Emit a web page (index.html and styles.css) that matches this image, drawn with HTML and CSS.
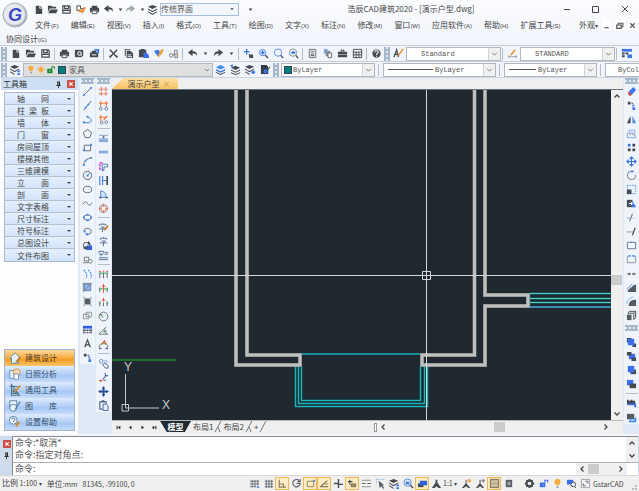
FILE: index.html
```
<!DOCTYPE html>
<html lang="zh-CN">
<head>
    <meta charset="utf-8">
    <title>浩辰CAD建筑2020</title>
    <link rel="stylesheet" href="styles.css">
</head>
<body>
    <svg class="sprite" aria-hidden="true">
        <symbol id="new" viewBox="0 0 12 12"><path fill="#454a50" d="M3 2h4v3h3v6H3zM8 2l2 2H8z"/></symbol>
        <symbol id="open" viewBox="0 0 12 12"><path fill="#454a50" d="M1 2h4l1 1h4v2H3L1 9zM3.500 6H12l-2 4H1.500z"/></symbol>
        <symbol id="save" viewBox="0 0 12 12"><path fill="none" stroke="#454a50" stroke-width="1.300" d="M2 2h7l1 1v7H2zM4 2v3h4V2M2 7h8"/></symbol>
        <symbol id="saveas" viewBox="0 0 12 12"><path fill="none" stroke="#454a50" d="M2 2h4v3h3M2 2v5h3"/><path fill="#e8922e" d="M4 6h4l2-3 2 1-4 7-1-2H4z"/></symbol>
        <symbol id="print" viewBox="0 0 12 12"><path fill="#454a50" d="M3 2h6v2H3zM1 4h10v5H9V7H3v2H1z"/><path fill="none" stroke="#454a50" d="M3.500 7.500h5v3h-5z"/></symbol>
        <symbol id="preview" viewBox="0 0 12 12"><path fill="#454a50" d="M1 2h9v8H1z"/><circle cx="6" cy="6" r="2.500" fill="#fff"/><circle cx="6" cy="6" r="1.300" fill="#454a50"/><path stroke="#fff" d="M8 8l3 3"/></symbol>
        <symbol id="publish" viewBox="0 0 12 12"><path fill="#454a50" d="M1 5h9v5H1zM3 3h5v2H3z"/><path fill="#fff" d="M3 7h5v1H3z"/><path fill="#3b78e7" d="M6 1h5v5H9V3H6z"/></symbol>
        <symbol id="cut" viewBox="0 0 12 12"><path fill="none" stroke="#454a50" stroke-width="1.500" d="M2 2l7 7M10 2L3 9"/><circle cx="2.500" cy="9.500" r="1.200" fill="#454a50"/><circle cx="9.500" cy="9.500" r="1.200" fill="#454a50"/></symbol>
        <symbol id="copy" viewBox="0 0 12 12"><path fill="#454a50" d="M2 1h6v1H3v7H2zM4 3h4l3 3v5H4z"/><path stroke="#fff" d="M5 7.500h4M5 9.500h5"/></symbol>
        <symbol id="paste" viewBox="0 0 12 12"><path fill="#454a50" d="M1 2h8v8H1zM3 1h4v2H3z"/><path fill="#3b6ff0" d="M6 5h3l3 3v3H6z"/></symbol>
        <symbol id="match" viewBox="0 0 12 12"><path fill="#3b78e7" d="M1 3l5-1 2 3-3 4z"/><path fill="#e8a23a" d="M7 4l3-3 2 1-3 5-4 4 1-4z"/></symbol>
        <symbol id="blockedit" viewBox="0 0 12 12"><path fill="none" stroke="#777c84" d="M5 7.500h2v-5h3v4M7.500 6.500h3v4h-3z"/><circle cx="3.500" cy="8" r="2" fill="none" stroke="#777c84"/><path stroke="#e8a23a" d="M8 10l3-3"/></symbol>
        <symbol id="undo" viewBox="0 0 12 12"><path fill="#454a50" d="M1 5l5-4v2.500c4 0 5 2 5 5-1-2-2-2.500-5-2.500V9z"/></symbol>
        <symbol id="redo" viewBox="0 0 12 12"><path fill="#454a50" d="M11 5L6 1v2.500C2 3.500 1 6 1 9c1-2 2-3 5-3v3z"/></symbol>
        <symbol id="redo-off" viewBox="0 0 12 12"><path fill="#a2a7ae" d="M11 5L6 1v2.500C2 3.500 1 6 1 9c1-2 2-3 5-3v3z"/></symbol>
        <symbol id="drop" viewBox="0 0 12 12"><path fill="#444" d="M4 5h4L6 7.500z"/></symbol>
        <symbol id="layers" viewBox="0 0 12 12"><path fill="#454a50" d="M6 1l5 2-5 2.500L1 3zM1 5l5 2.500L11 5v1.300L6 9 1 6.300zM1 8l5 2.500L11 8v1L6 12 1 9z"/></symbol>
        <symbol id="layers-set" viewBox="0 0 12 12"><path fill="#454a50" d="M5 1l5 2-5 2.500L0 3zM0 5l5 2.500L10 5v1L5 9 0 6zM0 8l5 2.500V12L0 9z"/><path fill="#3b78e7" d="M8 7h3v2H8zM8 10h3v2H8z"/></symbol>
        <symbol id="layers-blue" viewBox="0 0 12 12"><path fill="#3b8cf0" d="M6 1l5 2.500L6 6 1 3.500z"/><path fill="#2f6fd8" d="M1 5.500L6 8l5-2.500V7L6 9.500 1 7z"/><path fill="#454a50" d="M1 8.500L6 11l5-2.500v1L6 12 1 9.500z"/></symbol>
        <symbol id="layers-prev" viewBox="0 0 12 12"><path fill="#454a50" d="M6 2l5 2-5 2.500L1 4zM1 6l5 2.500L11 6v1L6 9.500 1 7zM1 9l5 2 5-2v1l-5 2-5-2z"/><path fill="#3b78e7" d="M0 2l3-2v4z"/></symbol>
        <symbol id="layers-dot" viewBox="0 0 12 12"><path fill="#454a50" d="M5 1l5 2-5 2.500L0 3zM0 5l5 2.500L10 5v1L5 9 0 6zM0 8l5 2.500V12L0 9z"/><circle cx="9" cy="9" r="2" fill="#3b78e7"/></symbol>
        <symbol id="layer-state" viewBox="0 0 12 12"><path fill="#333a44" d="M1 1h6l2 2v8H1z"/><path fill="#3b78e7" d="M4 6h4v4H4z"/><path stroke="#333a44" d="M8 7l3-4"/></symbol>
        <symbol id="pan" viewBox="0 0 12 12"><path stroke="#2f6fe4" stroke-width="1.300" d="M4 1v6M1 4h6"/><path fill="#454a50" d="M6 6l1 1h4v4H7z"/></symbol>
        <symbol id="zoom-in" viewBox="0 0 12 12"><circle cx="5" cy="5" r="3.500" fill="#dbe9ff" stroke="#4f8ae8"/><path stroke="#454a50" stroke-width="1.500" d="M8 8l3 3"/><path stroke="#2f6fe4" stroke-width="1.500" d="M5 3v4M3 5h4"/></symbol>
        <symbol id="zoom-window" viewBox="0 0 12 12"><circle cx="5.500" cy="5" r="4" fill="none" stroke="#4f8ae8"/><path stroke="#454a50" stroke-width="1.500" d="M8.500 8l2.500 3"/></symbol>
        <symbol id="zoom-prev" viewBox="0 0 12 12"><circle cx="5.500" cy="5" r="4" fill="none" stroke="#8a9098"/><path stroke="#454a50" stroke-width="1.500" d="M8.500 8l2.500 3"/><path fill="#2f6fe4" d="M3 5l3-2v1h2v2H6v1z"/></symbol>
        <symbol id="props" viewBox="0 0 12 12"><path fill="none" stroke="#666c74" d="M2.500 1.500h7v9h-7zM4 3.500h4M4 5.500h4"/><path fill="#666c74" d="M4 7h4v2H4z"/></symbol>
        <symbol id="sheets" viewBox="0 0 12 12"><path fill="#7da7ec" d="M2 1h4v5H2z"/><path fill="#8a9098" d="M4 3h5v6H4z"/><path fill="#f4f6fa" stroke="#666c74" d="M6.500 5.500h4v5h-4z"/></symbol>
        <symbol id="toolbox" viewBox="0 0 12 12"><path fill="#454a50" d="M4 2h4v2h3v3H1V4h3zM1 7.500h10V10H1z"/><path fill="#fff" d="M5 3h2v1H5z"/></symbol>
        <symbol id="calc" viewBox="0 0 12 12"><path fill="none" stroke="#454a50" d="M1.500 1.500h9v9h-9zM1 4.500h10M1 7.500h10M4.500 4v7M7.500 4v7"/></symbol>
        <symbol id="help" viewBox="0 0 12 12"><circle cx="6" cy="6" r="4.500" fill="#454a50"/><path fill="none" stroke="#fff" stroke-width="1.200" d="M4 4.500c0-2 4-2 4 0C8 6 6 5.500 6 7.500M6 8.500v1"/></symbol>
        <symbol id="style" viewBox="0 0 12 12"><path fill="none" stroke="#454a50" stroke-width="1.400" d="M1 10l3-8 2 8M2 7h4"/><path stroke="#e8922e" stroke-width="1.600" d="M11 1L6 8"/></symbol>
        <symbol id="dimstyle" viewBox="0 0 12 12"><path stroke="#9aa0a8" d="M1 9.500h10M2 8v3M10 8v3"/><path stroke="#e8922e" stroke-width="1.600" d="M9 2L4 8"/></symbol>
        <symbol id="tablestyle" viewBox="0 0 12 12"><path fill="#3b78e7" d="M1 1h11v3H1z"/><path fill="#454a50" d="M1 5h3v2H1zM5 5h3v2H5zM1 8h3v2H1z"/><path fill="#3b78e7" d="M7 7h5v4H7z"/></symbol>
        <symbol id="line" viewBox="0 0 12 12"><path stroke="#5d646d" d="M2 10l8-8"/><path fill="#3b8cf0" d="M1 9h2v2H1zM9 1h2v2H9z"/></symbol>
        <symbol id="xline" viewBox="0 0 12 12"><path stroke="#5d646d" d="M2 11l8-10"/><path fill="#3b8cf0" d="M3 7h2v2H3zM6 4h2v2H6z"/></symbol>
        <symbol id="pline" viewBox="0 0 12 12"><path fill="none" stroke="#3b78e7" d="M2 9.500h6c4-1 2-6-2-6"/><path fill="#3b8cf0" d="M1 8h2v2H1zM5 2h2v2H5z"/></symbol>
        <symbol id="polygon" viewBox="0 0 12 12"><path fill="none" stroke="#5d646d" d="M6 1.500l4.500 3.500-2 5.500h-5L1.500 5z"/></symbol>
        <symbol id="rect" viewBox="0 0 12 12"><path fill="none" stroke="#5d646d" d="M2.500 3.500h7v6h-7z"/><path fill="#3b8cf0" d="M1 8h2v2H1zM9 2h2v2H9z"/></symbol>
        <symbol id="arc" viewBox="0 0 12 12"><path fill="none" stroke="#5d646d" d="M2 10c0-5 3-7 8-8"/><path fill="#3b8cf0" d="M1 9h2v2H1zM3 4h2v2H3zM9 1h2v2H9z"/></symbol>
        <symbol id="circle" viewBox="0 0 12 12"><circle cx="6" cy="6" r="4.500" fill="none" stroke="#5d646d"/><path stroke="#3b8cf0" d="M5 7l4-4"/><path fill="#3b8cf0" d="M5 5h2v2H5z"/></symbol>
        <symbol id="ellipse" viewBox="0 0 12 12"><ellipse cx="6" cy="6" rx="4.500" ry="3.500" fill="none" stroke="#5d646d"/></symbol>
        <symbol id="spline" viewBox="0 0 12 12"><path fill="none" stroke="#5d646d" d="M1 7c2-4 4-3 5-1s3 3 5-1"/></symbol>
        <symbol id="ellipse-axis" viewBox="0 0 12 12"><ellipse cx="6" cy="6" rx="4" ry="3" fill="none" stroke="#5d646d"/><path fill="#3b8cf0" d="M1 5h2v2H1zM9 5h2v2H9zM5 2h2v2H5zM5 8h2v2H5z"/></symbol>
        <symbol id="ellipse-arc" viewBox="0 0 12 12"><path fill="none" stroke="#5d646d" d="M2 6c0-5 9-4 8 0 0 3-3 3-4 3"/><path fill="#3b8cf0" d="M2 5h2v2H2zM4 8h3v2H4z"/></symbol>
        <symbol id="insert" viewBox="0 0 12 12"><circle cx="5" cy="6" r="3.500" fill="none" stroke="#454a50"/><path fill="#2f5fe4" d="M5 6h6v5H5z"/><path fill="#454a50" d="M7 1l3 4H6zM2 7h4v3H2z"/></symbol>
        <symbol id="block" viewBox="0 0 12 12"><path fill="none" stroke="#6b727b" d="M1 9.500h6M2.500 3.500h5v4h-5z"/><circle cx="9" cy="8" r="2" fill="#fff" stroke="#6b727b"/></symbol>
        <symbol id="points" viewBox="0 0 12 12"><path fill="none" stroke="#3b8cf0" stroke-width="1.300" stroke-dasharray="2 1" d="M2 2l3 4v5M7 2l3 4v5"/></symbol>
        <symbol id="hatch" viewBox="0 0 12 12"><path fill="#8fb5ea" stroke="#5d80b5" d="M2.500 2.500h7v7h-7z"/><path fill="none" stroke="#7b828b" d="M1 1.500h10M1.500 1v10M2 10l8-8"/></symbol>
        <symbol id="gradient" viewBox="0 0 12 12"><path fill="#555b63" d="M3 3h6v6H3z"/><path fill="none" stroke="#a4a9b0" d="M1 1.500h2M9 1.500h2M2.500 2.500h7v7h-7zM1 10.500h2M9 10.500h2"/></symbol>
        <symbol id="region" viewBox="0 0 12 12"><path fill="#eef2f8" stroke="#8a9098" d="M4.500 2.500h6v5h-6zM1.500 4.500h6v5h-6z"/></symbol>
        <symbol id="table" viewBox="0 0 12 12"><path fill="#2f5fe4" d="M1 2h10v3H1z"/><path fill="#454a50" d="M1 6h3v2H1zM5 6h2v2H5zM8 6h3v2H8zM1 9h3v1H1zM5 9h2v1H5zM8 9h3v1H8z"/></symbol>
        <symbol id="mtext" viewBox="0 0 12 12"><path fill="none" stroke="#454a50" stroke-width="1.300" d="M3 10l3-8 3 8M4 7.500h4"/></symbol>
        <symbol id="nodes" viewBox="0 0 12 12"><path fill="#454a50" d="M2 2h3v3H2zM6 3h2v1H6z"/><path fill="#3b78e7" d="M7 5h2v2H7zM7 8h3v3H7z"/></symbol>
        <symbol id="grid-red" viewBox="0 0 12 12"><path stroke="#e8673f" stroke-dasharray="2 .5" d="M3.500 1v10M8.500 1v10M1 3.500h10M1 8.500h10"/></symbol>
        <symbol id="axis" viewBox="0 0 12 12"><path stroke="#f07a3a" stroke-width="1.200" d="M3 1v7M9 1v7M1 3.500h10"/><circle cx="3" cy="9.500" r="1.500" fill="#fff" stroke="#55789d"/><circle cx="9" cy="9.500" r="1.500" fill="#fff" stroke="#55789d"/></symbol>
        <symbol id="axis2" viewBox="0 0 12 12"><path fill="none" stroke="#f07a3a" stroke-width="1.200" d="M3 1v7M1 3.500h9M10 2L6 7"/><circle cx="4" cy="9.500" r="1.500" fill="#fff" stroke="#55789d"/><circle cx="9" cy="9" r="1.500" fill="#fff" stroke="#55789d"/></symbol>
        <symbol id="wall" viewBox="0 0 12 12"><path fill="#86abd9" d="M1 7h10v3H1z"/><path stroke="#7f9cbd" d="M1 2.500h10M1 6.500h10"/><path stroke="#53779f" d="M6 3v3M4.500 4.500h3"/></symbol>
        <symbol id="wall2" viewBox="0 0 12 12"><path fill="#86abd9" d="M1 4h10v3H1z"/></symbol>
        <symbol id="corner" viewBox="0 0 12 12"><path fill="none" stroke="#e41be0" stroke-width="1.300" stroke-dasharray="3 1" d="M5 2H2v7h3"/><path fill="none" stroke="#4775aa" d="M4.500 3.500h6v3h-4v4h-2z"/></symbol>
        <symbol id="door-gap" viewBox="0 0 12 12"><path stroke="#3f7fd0" stroke-width="1.200" d="M2 1v10M5 1v10M5 6h4"/><path stroke="#222" stroke-width="1.500" d="M10 1v10"/></symbol>
        <symbol id="door" viewBox="0 0 12 12"><path fill="#d8eaff" stroke="#3f7fd0" d="M3 9V2c4 1 6 3 6 7z"/><path stroke="#4f6479" stroke-width="1.300" d="M1 9.500h3M8 9.500h3"/></symbol>
        <symbol id="column" viewBox="0 0 12 12"><circle cx="6" cy="6" r="4.500" fill="none" stroke="#8d939b"/><path fill="none" stroke="#e8673f" d="M3.500 5V3.500H5M7 3.500h1.500V5M8.500 7v1.500H7M5 8.500H3.500V7M6 1v3M6 8v3M1 6h3M8 6h3"/></symbol>
        <symbol id="text-edit" viewBox="0 0 12 12"><path fill="none" stroke="#4f6f94" d="M1.500 4V2.500h7V4M5 1v1M3 5.500h4L5 7v3.500H4M1 7.500h7"/><path stroke="#c9721f" stroke-width="1.800" d="M11 4l-4 5"/></symbol>
        <symbol id="text-one" viewBox="0 0 12 12"><path fill="none" stroke="#4f6f94" d="M2.500 4V2.500h7V4M6 1v1M4 5.500h4L6 7v3.500H5M2 7.500h8"/></symbol>
        <symbol id="text-multi" viewBox="0 0 12 12"><path fill="none" stroke="#4f6f94" d="M1 3V1.500h5V3M1 4.500h5M3.500 4v3M7 2.500h4M7 4.500h4M1 8.500h10M1 10.500h10"/></symbol>
        <symbol id="dim" viewBox="0 0 12 12"><path stroke="#55606c" d="M2 4v6M6 4v6M10 4v6"/><path stroke="#2f9a4c" d="M1 4.500h10"/><path fill="#d44" d="M1 2h2v1H1zM5 2h2v1H5zM9 2h2v1H9z"/></symbol>
        <symbol id="dim-add" viewBox="0 0 12 12"><path stroke="#55606c" d="M2 5v5M10 5v5"/><path stroke="#2f9a4c" d="M1 6.500h10"/><path stroke="#e4522b" d="M6 1v10M4 3.500h4"/></symbol>
        <symbol id="dim-gap" viewBox="0 0 12 12"><path stroke="#55606c" d="M2 5v5M6 6v4M10 5v5"/><path stroke="#2f9a4c" d="M1 6.500h2M9 6.500h2"/><path stroke="#e4522b" d="M6 1v4M4 3.500h4"/></symbol>
        <symbol id="dim-radius" viewBox="0 0 12 12"><circle cx="6" cy="6" r="4.800" fill="none" stroke="#6b727b"/><path stroke="#2f9a4c" d="M2 4l4 3M2 4h3"/></symbol>
        <symbol id="dim-angle" viewBox="0 0 12 12"><path fill="none" stroke="#6b727b" d="M11 10H1l8-8M7 4c2 2 2 4 2 6"/><path fill="#2f9a4c" d="M6 6h2v2H6z"/></symbol>
        <symbol id="dim-arc" viewBox="0 0 12 12"><path fill="none" stroke="#2f9a4c" d="M1 8c1-4 9-4 10 0"/><path fill="none" stroke="#e4522b" stroke-width="1.300" d="M4 6l3-4 2 4"/><path stroke="#3f5f88" d="M1 10.500h3M8 10.500h3M2 8v3M10 8v3"/></symbol>
        <symbol id="links" viewBox="0 0 12 12"><circle cx="3.500" cy="3.500" r="2" fill="none" stroke="#6b8caf"/><circle cx="8.500" cy="4" r="1.500" fill="none" stroke="#7fa9e8"/><path fill="none" stroke="#4f6f94" d="M5 7l3-1 3 2v3H8z"/></symbol>
        <symbol id="swap" viewBox="0 0 12 12"><path stroke="#e4522b" d="M1 9.500h4M3 8v3"/><path fill="none" stroke="#4f6f94" stroke-width="1.200" d="M5 8l4-4M8 1v3h3M6 9h3"/></symbol>
        <symbol id="move-dark" viewBox="0 0 12 12"><path fill="#27509a" d="M6 0l2 3H7v2h2V4l3 2-3 2V7H7v2h1l-2 3-2-3h1V7H3v1L0 6l3-2v1h2V3H4z"/></symbol>
        <symbol id="clip" viewBox="0 0 12 12"><path fill="none" stroke="#44658f" stroke-width="1.200" d="M5 10H2V2h7v2M4 1h3"/><path fill="#e4eeff" stroke="#44658f" d="M5.500 4.500H9L11 6.500v5H5.500z"/></symbol>
        <symbol id="erase" viewBox="0 0 12 12"><path fill="#3b78f0" d="M8 1l3 3-5 6-3-4z"/><path fill="#e03a2d" d="M3 6l3 4-2 1-2-3z"/></symbol>
        <symbol id="mirror" viewBox="0 0 12 12"><path fill="#454a50" d="M5 2v8H1z"/><path fill="#4f8ae8" d="M7 2v8h4z"/></symbol>
        <symbol id="offset" viewBox="0 0 12 12"><path fill="none" stroke="#7da7ec" d="M1.500 10.500h9v-2h-1v-6h-6v3h-2z"/><path fill="none" stroke="#8a9098" d="M4.500 8V5.500h3V8"/></symbol>
        <symbol id="array" viewBox="0 0 12 12"><path fill="#3b78f0" d="M2 2h3v3H2z"/><path fill="#454a50" d="M7 2h3v3H7zM2 7h3v3H2zM7 7h3v3H7z"/></symbol>
        <symbol id="move" viewBox="0 0 12 12"><path fill="none" stroke="#2f6fe4" stroke-width="1.200" d="M6 1v10M1 6h10M4 3l2-2 2 2M4 9l2 2 2-2M3 4L1 6l2 2M9 4l2 2-2 2"/></symbol>
        <symbol id="rotate" viewBox="0 0 12 12"><path fill="none" stroke="#8a9098" stroke-width="1.200" d="M7 1.500A4.500 4.500 0 1 0 10.500 5"/><path fill="#3b78f0" d="M6 0l3 1.500L6 3z"/></symbol>
        <symbol id="scale" viewBox="0 0 12 12"><path fill="none" stroke="#4f8ae8" stroke-dasharray="1.500 1" d="M1.500 1.500h9v9h-9z"/><path fill="#454a50" d="M1 6h5v5H1z"/></symbol>
        <symbol id="stretch" viewBox="0 0 12 12"><path fill="#454a50" d="M1 2h6v8H1z"/><path fill="#3b78f0" d="M7 3l4 7H6z"/><path fill="none" stroke="#fff" d="M3 6h4M5 4l2 2-2 2"/></symbol>
        <symbol id="trim" viewBox="0 0 12 12"><path stroke="#6b727b" stroke-width="1.200" d="M4 10l3-8"/><path stroke="#7da7ec" d="M1 6.500h3"/><path stroke="#c9b39b" stroke-dasharray="1 1" d="M7 6.500h4"/></symbol>
        <symbol id="extend" viewBox="0 0 12 12"><path stroke="#454a50" stroke-width="1.300" d="M7 10l3-8"/><path stroke="#6b727b" stroke-dasharray="2 1" d="M1 6.500h7"/></symbol>
        <symbol id="break-point" viewBox="0 0 12 12"><path fill="none" stroke="#6b727b" d="M1.500 2.500h9v7h-9z"/><path fill="#3b8cf0" d="M5 2h2v1H5z"/></symbol>
        <symbol id="break" viewBox="0 0 12 12"><path fill="none" stroke="#8a9098" d="M3 2.500H1.500v7h9v-7H9"/><path fill="#3b8cf0" d="M3 1h2v2H3zM7 1h2v2H7z"/></symbol>
        <symbol id="join" viewBox="0 0 12 12"><path stroke="#6b727b" d="M1 6.500h4M7 6.500h4"/><path fill="#454a50" d="M3 5l2.500 1.500L3 8zM9 5L6.500 6.500 9 8z"/></symbol>
        <symbol id="chamfer" viewBox="0 0 12 12"><path fill="#555b63" d="M9 3h2v8H2V9z"/><path stroke="#4f8ae8" d="M1 8l6-6"/></symbol>
        <symbol id="fillet" viewBox="0 0 12 12"><path fill="#555b63" d="M10 4h1v7H3c0-4 2-7 7-7z"/><path fill="none" stroke="#7da7ec" d="M1 9c0-5 3-7 7-8"/></symbol>
        <symbol id="explode" viewBox="0 0 12 12"><path fill="none" stroke="#454a50" d="M2 3l2-1.500h6.500V8L9 10M2 3.500h6.500V11M9 3l1.500-1.500"/><path fill="#555b63" d="M1 5h5v6H1z"/></symbol>
        <symbol id="front" viewBox="0 0 12 12"><path fill="#454a50" d="M1 1h5v5H1zM7 7h4v4H7z"/><path fill="#3b6ff0" d="M2 2h7v7H2z"/></symbol>
        <symbol id="back" viewBox="0 0 12 12"><path fill="#3b6ff0" d="M3 3h7v6H3z"/><path fill="#454a50" d="M1 1h5v4H1zM6 7h5v4H6z"/></symbol>
        <symbol id="above" viewBox="0 0 12 12"><path fill="#454a50" d="M5 5h6v5H5z"/><path fill="#3b6ff0" d="M2 1h7v7H2z"/></symbol>
        <symbol id="under" viewBox="0 0 12 12"><path fill="#3b6ff0" d="M1 1h7v6H1z"/><path fill="#454a50" d="M4 5h7v5H4z"/></symbol>
        <symbol id="text-front" viewBox="0 0 12 12"><path fill="#454a50" d="M1 2h2v1h2V2h2v1h3v4H1z"/><path fill="#3b6ff0" d="M2 6h9v2H2zM9 8h2v2H9z"/></symbol>
        <symbol id="hatch-back" viewBox="0 0 12 12"><path fill="#555b63" d="M1 2h8v6H1z"/><path fill="none" stroke="#3b8cf0" stroke-width="1.300" d="M4 10l3-3M7 11l4-5M3 10.500h8M10.500 6v5"/></symbol>
        <symbol id="snap" viewBox="0 0 12 12"><path stroke="#666c74" d="M3.500 2v8M6.500 2v8M9.500 2v6M1 3.500h10M1 6.500h10M1 9.500h7"/><path fill="#3b78f0" d="M9 9h2v2H9z"/></symbol>
        <symbol id="grid" viewBox="0 0 12 12"><path stroke="#666c74" d="M3.500 2v9M6.500 2v9M9.500 2v9M2 3.500h9M2 6.500h9M2 9.500h9"/></symbol>
        <symbol id="ortho" viewBox="0 0 12 12"><path fill="none" stroke="#8a7d5e" stroke-width="1.200" d="M2.500 2v8H10M3 6.500h4V10"/></symbol>
        <symbol id="polar" viewBox="0 0 12 12"><path fill="none" stroke="#555b63" stroke-width="1.200" d="M9 3a4 4 0 1 0 1 3H6M10 1v3H7"/></symbol>
        <symbol id="osnap" viewBox="0 0 12 12"><path fill="none" stroke="#8a7d5e" d="M2.500 3.500h7v6h-7z"/><path fill="#3b8cf0" d="M9 2h2v2H9z"/></symbol>
        <symbol id="otrack" viewBox="0 0 12 12"><path stroke="#8a7d5e" stroke-width="1.300" d="M2 9l7-6M1 9.500h9"/><path fill="#8a7d5e" d="M6 6h4v1H6z"/></symbol>
        <symbol id="dyn-ucs" viewBox="0 0 12 12"><path fill="none" stroke="#454a50" stroke-width="1.500" d="M6 1v6h5M1 6h5v5"/></symbol>
        <symbol id="dyn-input" viewBox="0 0 12 12"><path stroke="#454a50" stroke-width="1.200" d="M3 2v5M1 4h5"/><path fill="#b8935f" stroke="#6f6551" d="M4.500 6.500h5v3h-5z"/></symbol>
        <symbol id="weight" viewBox="0 0 12 12"><path stroke="#888d94" d="M1 2.500h10M1 9.500h10"/><path stroke="#555b63" d="M1 6h4M7 6h4"/></symbol>
        <symbol id="select" viewBox="0 0 12 12"><path stroke="#77a3dd" stroke-dasharray="1 1" d="M1 1.500h9M1.500 1v6"/><path fill="#555b63" d="M4 3l6 5H8l2 3-1 1-2-3-2 2z"/></symbol>
        <symbol id="zoom-sel" viewBox="0 0 12 12"><circle cx="5" cy="5" r="4" fill="#dbe9ff" stroke="#5588cf"/><path stroke="#454a50" stroke-width="1.500" d="M8 8l3 3"/><path fill="#4f7fd0" d="M3 4h4v3H3z"/></symbol>
        <symbol id="cycle" viewBox="0 0 12 12"><path fill="#454a50" d="M1 6h6v4H1z"/><path fill="#2f5fe4" d="M3 3h8v5H3z"/></symbol>
        <symbol id="anno" viewBox="0 0 12 12"><path fill="#454a50" d="M5 2h2v3l4 6H8L6 9l-2 2H1l4-6z"/></symbol>
        <symbol id="anno-vis" viewBox="0 0 12 12"><path fill="#454a50" d="M5 2h1v4l4 5H8L5.500 9 3 11H1l4-5z"/><circle cx="9" cy="3" r="2" fill="#efab47"/></symbol>
        <symbol id="anno-auto" viewBox="0 0 12 12"><path fill="#454a50" d="M5 2h1v4l4 5H8L5.500 9 3 11H1l4-5z"/><path stroke="#666c74" d="M9 1v4M7 3h4"/></symbol>
        <symbol id="pattern" viewBox="0 0 12 12"><path fill="#efe2bd" stroke="#6a624e" d="M1.500 1.500h9v9h-9z"/><path stroke="#6a624e" stroke-dasharray="1 1" d="M2 3h8M3 4.500h8M2 6h8M3 7.500h8M2 9h8"/></symbol>
        <symbol id="hardware" viewBox="0 0 12 12"><path fill="#555b63" d="M3 2h7v8H3z"/><path fill="#d5d9de" d="M5 4h1v4H5zM7 4h1v4H7z"/></symbol>
        <symbol id="gear" viewBox="0 0 12 12"><path fill="#454a50" d="M5 1h2l.5 1.500L9 2l1 1-.5 1.500L11 5v2l-1.500.5L10 9l-1 1-1.500-.5L7 11H5l-.5-1.500L3 10 2 9l.5-1.500L1 7V5l1.500-.5L2 3l1-1 1.500.5z"/><circle cx="6" cy="6" r="2" fill="#f0f0f0"/></symbol>
        <symbol id="lock" viewBox="0 0 12 12"><path fill="#3b6ff0" d="M2 5h6v5H2z"/><path fill="none" stroke="#3b6ff0" stroke-width="1.200" d="M7.500 5V2.500h3V5"/><path fill="#fff" d="M5 7h1v1H5z"/></symbol>
        <symbol id="lock-green" viewBox="0 0 12 12"><path fill="#178a2d" d="M1 5h7v6H1z"/><path fill="none" stroke="#178a2d" stroke-width="1.300" d="M7 5V2.500h3.500V5"/><path fill="#fff" d="M4 7h1v2H4z"/></symbol>
        <symbol id="bulb" viewBox="0 0 12 12"><path fill="#f4ad3d" d="M6 1c4 0 4 4 2 6v1H4V7C2 5 2 1 6 1z"/><path fill="#8b93a0" d="M5 9h2v2H5z"/></symbol>
        <symbol id="sun" viewBox="0 0 12 12"><path stroke="#f4b24d" d="M6 0v12M0 6h12M2 2l8 8M10 2l-8 8"/><circle cx="6" cy="6" r="3" fill="#f4a63d"/></symbol>
        <symbol id="isolate" viewBox="0 0 12 12"><path fill="#3b6ff0" d="M1 2h7v5H1z"/><circle cx="8" cy="7" r="2.500" fill="#eaf1ff" stroke="#454a50"/><path stroke="#454a50" d="M9 9l2 2"/></symbol>
        <symbol id="fullscreen" viewBox="0 0 12 12"><path fill="none" stroke="#999ea6" d="M1.500 1.500h9v9h-9z"/><path fill="none" stroke="#555b63" d="M6 3.500h2.500V6M3.500 6v2.500H6"/></symbol>
        <symbol id="chevron" viewBox="0 0 12 12"><path fill="none" stroke="#555" d="M3 4.500l3 3 3-3"/></symbol>
        <symbol id="left" viewBox="0 0 12 12"><path fill="none" stroke="#444" stroke-width="1.300" d="M7.500 3.500L5 6l2.500 2.500"/></symbol>
        <symbol id="right" viewBox="0 0 12 12"><path fill="none" stroke="#444" stroke-width="1.300" d="M4.500 3.500L7 6 4.500 8.500"/></symbol>
        <symbol id="up" viewBox="0 0 12 12"><path fill="none" stroke="#444" stroke-width="1.300" d="M3.500 7.500L6 5l2.500 2.500"/></symbol>
        <symbol id="down" viewBox="0 0 12 12"><path fill="none" stroke="#444" stroke-width="1.300" d="M3.500 4.500L6 7l2.500-2.500"/></symbol>
        <symbol id="tab-first" viewBox="0 0 12 12"><path fill="#111" d="M4 4h1v4H4zM8 4v4L5.500 6z"/></symbol>
        <symbol id="tab-prev" viewBox="0 0 12 12"><path fill="#111" d="M7 4v4L4.500 6z"/></symbol>
        <symbol id="tab-next" viewBox="0 0 12 12"><path fill="#111" d="M5 4v4l2.500-2z"/></symbol>
        <symbol id="tab-last" viewBox="0 0 12 12"><path fill="#111" d="M7 4h1v4H7zM4 4v4l2.500-2z"/></symbol>
        <symbol id="pin" viewBox="0 0 12 12"><path fill="#222" d="M4 2h4v5h1v1H6.500v2.500h-1V8H3V7h1z"/><path fill="#eef" d="M5 3h1v4H5z"/></symbol>
        <symbol id="slash" viewBox="0 0 10 12"><path fill="none" stroke="#777" d="M8 0L2 11"/></symbol>
        <symbol id="fork" viewBox="0 0 10 12"><path fill="none" stroke="#777" d="M8 0L2 11M5 6l2 5"/></symbol>
        <symbol id="home" viewBox="0 0 16 16"><path fill="#e7f3fb" stroke="#4f7f9e" d="M2 8l6-6 6 6h-2v6H4V8z"/><path stroke="#c77b28" stroke-width="2" d="M14 7l-5 6"/></symbol>
        <symbol id="sunlight" viewBox="0 0 16 16"><path fill="#dff0fa" stroke="#6795b0" d="M2 4h6v9H2z"/><circle cx="10" cy="6" r="4" fill="#f8d7b0" stroke="#d18d4a"/><path fill="#fff" stroke="#6795b0" d="M7 8h5v6H7z"/></symbol>
        <symbol id="ruler" viewBox="0 0 16 16"><path fill="none" stroke="#4f7487" stroke-width="1.300" d="M2 4h9M4 2v12h9zM6 8v4h4z"/><path stroke="#d38a37" stroke-width="2" d="M14 3L8 10"/></symbol>
        <symbol id="gallery" viewBox="0 0 16 16"><path fill="#e8f4ff" stroke="#557d99" d="M2 2h8v8H2z"/><circle cx="6" cy="10" r="4" fill="#e8f4ff" stroke="#557d99"/><path stroke="#557d99" stroke-width="1.300" d="M8 12l6-9"/></symbol>
        <symbol id="assist" viewBox="0 0 16 16"><circle cx="6" cy="6" r="4.500" fill="#eef8ff" stroke="#557d99"/><path fill="none" stroke="#35657f" d="M4 5c0-2 4-2 4 0 0 1-2 1-2 3"/><path stroke="#d38a37" stroke-width="2.500" d="M9 13l4-5"/></symbol>
    </svg>

    <header class="header">
        <svg class="logo" viewBox="0 0 26 26" role="img" aria-label="GstarCAD">
            <defs>
                <linearGradient id="metal" x1="0" y1="0" x2="1" y2="1">
                    <stop offset="0" stop-color="#fff"/><stop offset="1" stop-color="#9aa0ab"/>
                </linearGradient>
            </defs>
            <circle cx="13" cy="13" r="12" fill="url(#metal)" stroke="#a7adb8"/>
            <circle cx="13" cy="13" r="10" fill="#e6e9ef"/>
            <text x="13" y="19" class="logo-letter">G</text>
        </svg>
        <div class="header-rows">
            <div class="title-row">
                <div class="tools quick" data-icons="new open save saveas print undo drop redo-off drop layers"></div>
                <label class="combo workspace"><select aria-label="工作空间"><option>传统界面</option></select><svg><use href="#drop"/></svg></label>
                <div class="tools quick-more" data-icons="drop"></div>
                <h1 class="title">浩辰CAD建筑2020 - [演示户型.dwg]</h1>
                <div class="window-buttons">
                    <button aria-label="最小化"><svg viewBox="0 0 10 10"><path d="M2 5.500h6"/></svg></button>
                    <button aria-label="最大化"><svg viewBox="0 0 10 10"><path d="M1.500 2.500h6v6h-6z"/></svg></button>
                    <button aria-label="关闭"><svg viewBox="0 0 10 10"><path d="M2 2l6 6M8 2L2 8"/></svg></button>
                </div>
            </div>
            <nav class="menu">
                <a href="#">文件<small>(F)</small></a>
                <a href="#">编辑<small>(E)</small></a>
                <a href="#">视图<small>(V)</small></a>
                <a href="#">插入<small>(I)</small></a>
                <a href="#">格式<small>(O)</small></a>
                <a href="#">工具<small>(T)</small></a>
                <a href="#">绘图<small>(D)</small></a>
                <a href="#">文字<small>(X)</small></a>
                <a href="#">标注<small>(N)</small></a>
                <a href="#">修改<small>(M)</small></a>
                <a href="#">窗口<small>(W)</small></a>
                <a href="#">应用软件<small>(A)</small></a>
                <a href="#">帮助<small>(H)</small></a>
                <a href="#">扩展工具<small>(S)</small></a>
                <a href="#" class="look">外观<small>▾</small></a>
                <span class="mdi">
                    <button aria-label="最小化图形"><svg viewBox="0 0 8 8"><path d="M2 6h4"/></svg></button>
                    <button aria-label="还原图形"><svg viewBox="0 0 8 8"><path d="M3 3V2h4v3H6M1.500 3.500h4v3h-4z"/></svg></button>
                    <button aria-label="关闭图形"><svg viewBox="0 0 8 8"><path d="M2 2l4 4M6 2L2 6"/></svg></button>
                </span>
            </nav>
        </div>
        <nav class="menu menu-second"><a href="#">协同设计<small>(G)</small></a></nav>
    </header>

    <div class="bar">
        <span class="grip"></span>
        <div class="tools" data-icons="new open save | print preview publish | cut copy paste match blockedit | undo drop redo drop | pan zoom-in zoom-window zoom-prev | props sheets toolbox calc | help"></div>
        <span class="grip"></span>
        <div class="tools" data-icons="style"></div>
        <label class="combo text-style"><select aria-label="文字样式"><option>Standard</option></select><svg><use href="#chevron"/></svg></label>
        <div class="tools" data-icons="| dimstyle"></div>
        <label class="combo text-style"><select aria-label="标注样式"><option>STANDARD</option></select><svg><use href="#chevron"/></svg></label>
        <div class="tools" data-icons="| tablestyle"></div>
    </div>
    <div class="bar">
        <span class="grip"></span>
        <div class="tools" data-icons="layers-set"></div>
        <label class="combo layer">
            <svg><use href="#bulb"/></svg><svg><use href="#sun"/></svg><svg><use href="#lock-green"/></svg><i class="swatch"></i>
            <select aria-label="图层"><option>家具</option></select><svg><use href="#chevron"/></svg>
        </label>
        <div class="tools" data-icons="layers-blue layers-prev layers-dot layer-state"></div>
        <span class="grip"></span>
        <label class="combo color"><i class="swatch"></i><select aria-label="颜色"><option>ByLayer</option></select><svg><use href="#chevron"/></svg></label>
        <span class="split"></span>
        <label class="combo linetype"><i class="sample"></i><select aria-label="线型"><option>ByLayer</option></select><svg><use href="#chevron"/></svg></label>
        <span class="split"></span>
        <label class="combo weight"><i class="sample"></i><select aria-label="线宽"><option>ByLayer</option></select><svg><use href="#chevron"/></svg></label>
        <span class="split"></span>
        <label class="combo plot"><select aria-label="打印样式"><option>ByColor</option></select></label>
    </div>

    <main class="work">
        <aside class="palette">
            <div class="palette-head">
                <h2>工具箱</h2>
                <button class="plain" aria-label="固定"><svg><use href="#pin"/></svg></button>
                <button class="close" aria-label="关闭工具箱"><svg viewBox="0 0 7 7"><path d="M2 2l3 3M5 2L2 5"/></svg></button>
            </div>
            <div class="palette-body">
                <div class="groups">
                    <button><span>轴 网</span></button>
                    <button><span>柱 梁 板</span></button>
                    <button><span>墙 体</span></button>
                    <button><span>门 窗</span></button>
                    <button><span>房间屋顶</span></button>
                    <button><span>楼梯其他</span></button>
                    <button><span>三维建模</span></button>
                    <button><span>立 面</span></button>
                    <button><span>剖 面</span></button>
                    <button><span>文字表格</span></button>
                    <button><span>尺寸标注</span></button>
                    <button><span>符号标注</span></button>
                    <button><span>总图设计</span></button>
                    <button><span>文件布图</span></button>
                </div>
                <div class="tasks">
                    <button class="active"><svg><use href="#home"/></svg><span>建筑设计</span></button>
                    <button><svg><use href="#sunlight"/></svg><span>日照分析</span></button>
                    <button><svg><use href="#ruler"/></svg><span>通用工具</span></button>
                    <button><svg><use href="#gallery"/></svg><span>图 库</span></button>
                    <button><svg><use href="#assist"/></svg><span>设置帮助</span></button>
                </div>
            </div>
        </aside>

        <div class="tools column" data-icons="= line xline pline polygon rect arc circle ellipse spline ellipse-axis ellipse-arc insert block points hatch gradient region table mtext nodes"></div>
        <div class="tools column" data-icons="= grid-red axis axis2 | wall wall2 corner door-gap door column | text-edit text-one text-multi | dim dim-add dim-gap dim-radius dim-angle dim-arc | links swap move-dark clip"></div>

        <section class="drawing">
            <div class="doc-tabs"><button class="doc-tab">演示户型<span>×</span></button></div>
            <div class="view">
                <svg class="canvas" viewBox="112 90 499 330" preserveAspectRatio="xMinYMin slice" role="img" aria-label="户型图">
                    <defs>
                        <path id="bay" d="M301 354h120M301.500 366v34.500h119V366M298.500 367v36.500h126V367M295.500 367v39.500h132V367"/>
                        <path id="window" d="M529 293.500h82M529 298.500h82M529 302.500h82M529.500 293v14"/>
                        <path id="walls" d="M236 90v275h64v-10h-53V90M474.500 90v265H422v10h63v-59h43v-11h-43V90"/>
                    </defs>
                    <path class="ground" d="M112 360h64"/>
                    <use href="#bay" class="glass-edge"/>
                    <use href="#bay" class="glass"/>
                    <use href="#window" class="glass-edge"/>
                    <use href="#window" class="glass pale"/>
                    <path class="deep" d="M529 307h82"/>
                    <use href="#walls" class="wall-edge"/>
                    <use href="#walls" class="wall"/>
                    <g class="ucs">
                        <path d="M125.500 374v34h33.500M122 404.500h6.500v6.500H122z"/>
                        <text x="124" y="371">Y</text>
                        <text x="162" y="409">X</text>
                    </g>
                    <path class="cross" d="M112 275.500h499M426.500 90v330M422.500 271.500h8v8h-8z"/>
                </svg>
                <div class="scroll scroll-y">
                    <button aria-label="上滚"><svg><use href="#up"/></svg></button>
                    <span class="track"><i class="thumb"></i></span>
                    <button aria-label="下滚"><svg><use href="#down"/></svg></button>
                </div>
            </div>
            <div class="layouts">
                <div class="tools nav" data-icons="tab-first tab-prev tab-next tab-last"></div>
                <button class="layout active">模型</button>
                <button class="layout">布局1</button><svg class="edge"><use href="#fork"/></svg>
                <button class="layout">布局2</button><svg class="edge"><use href="#fork"/></svg>
                <button class="layout">+</button><svg class="edge"><use href="#slash"/></svg>
                <span class="splitter"></span>
                <div class="scroll scroll-x">
                    <button aria-label="左滚"><svg><use href="#left"/></svg></button>
                    <span class="track"><i class="thumb"></i></span>
                    <button aria-label="右滚"><svg><use href="#right"/></svg></button>
                </div>
            </div>
        </section>

        <div class="tools column" data-icons="= erase nodes mirror offset array move rotate scale stretch trim extend break-point break join chamfer fillet explode = front back above under | text-front hatch-back"></div>
    </main>

    <section class="command">
        <div class="command-side">
            <button class="close" aria-label="关闭命令行"><svg viewBox="0 0 7 7"><path d="M2 2l3 3M5 2L2 5"/></svg></button>
            <button class="plain" aria-label="固定命令行"><svg><use href="#pin"/></svg></button>
        </div>
        <div class="command-main">
            <div class="history">
                <div class="lines"><p>命令:*取消*</p><p>命令:指定对角点:</p></div>
                <div class="scroll scroll-y">
                    <button aria-label="历史上滚"><svg><use href="#up"/></svg></button>
                    <button aria-label="历史下滚"><svg><use href="#down"/></svg></button>
                </div>
            </div>
            <div class="prompt">
                <label for="cmd">命令:</label>
                <input id="cmd" type="text">
                <div class="scroll scroll-x">
                    <button aria-label="命令左滚"><svg><use href="#left"/></svg></button>
                    <span class="track"><i class="thumb"></i></span>
                    <button aria-label="命令右滚"><svg><use href="#right"/></svg></button>
                </div>
            </div>
        </div>
    </section>

    <footer class="status">
        <span class="status-text"><b>比例</b> 1:100 <small>▾</small></span>
        <span class="status-text"><b>单位</b>:mm</span>
        <span class="status-text coords">81345, -99100, 0</span>
        <div class="tools" data-icons="snap grid ortho* polar osnap* otrack* dyn-ucs dyn-input* weight select layers-set zoom-sel cycle* anno"></div>
        <button class="scale">1:1 <small>▾</small></button>
        <div class="tools" data-icons="anno-vis anno-auto pattern* hardware"></div>
        <div class="tools end" data-icons="gear lock bulb isolate fullscreen"></div>
        <span class="brand">GstarCAD</span>
        <svg class="resize" viewBox="0 0 6 6"><path d="M4 0h2v2H4zM1 3h2v2H1zM4 3h2v2H4z"/></svg>
    </footer>
    <script src="script.js"></script>
</body>
</html>
```
FILE: styles.css
```
* { box-sizing: border-box; }
body { margin: 0; height: 100vh; display: flex; flex-direction: column; overflow: hidden; background: #f3f5fb; color: #444; font: 8px/12px "Noto Sans CJK SC", "Noto Sans", sans-serif; }
button, select, input { margin: 0; padding: 0; border: 0; background: none; color: inherit; font: inherit; }
h1, h2, p { margin: 0; font: inherit; }
a { color: inherit; text-decoration: none; }
svg { display: block; flex: none; width: 12px; height: 12px; }
.sprite { position: absolute; width: 0; height: 0; }

/* title and menus */
.header { display: grid; grid-template-columns: 31px 1fr; flex: none; background: linear-gradient(#fbfcfe, #f1f4fb); }
.logo { width: 26px; height: 26px; margin: 2px; }
.logo-letter { font: italic bold 18px "Liberation Sans", sans-serif; fill: #3d49c4; text-anchor: middle; }
.header-rows { min-width: 0; }
.title-row { display: flex; align-items: center; height: 18px; }
.title { flex: 1; padding-left: 14px; text-align: center; white-space: nowrap; }
.window-buttons { display: flex; }
.window-buttons button { display: grid; place-items: center; width: 29px; height: 18px; }
.window-buttons svg { width: 10px; height: 10px; fill: none; stroke: #444; }
.menu { display: flex; align-items: center; gap: 12px; height: 14px; padding: 0 2px 0 4px; white-space: nowrap; }
.menu small { font: 6px "Liberation Sans", sans-serif; }
.menu .look { margin-left: auto; }
.menu-second { grid-column: 1 / 3; height: 13px; padding-left: 6px; }
.mdi { display: flex; gap: 4px; margin-left: -8px; }
.mdi button { width: 9px; height: 10px; background: #fff; }
.mdi svg { width: 9px; height: 9px; fill: none; stroke: #555; }

/* tool buttons */
.tools { display: flex; align-items: center; flex: none; }
.tool { display: grid; place-items: center; width: 15px; height: 14px; }
.tool.drop { width: 11px; }
.tool svg { width: 11px; height: 11px; }
.split { flex: none; width: 1px; height: 12px; margin: 0 2px 0 1px; background: #b6bcc7; }
.quick .tool { width: 14px; }
.quick .tool.drop { width: 8px; }
.quick-more { padding-left: 6px; }
.bar { display: flex; align-items: center; flex: none; height: 16px; padding-left: 1px; border-top: 1px solid #c8cedb; background: #f1f4fb; overflow: hidden; }
.grip { flex: none; width: 6px; height: 14px; margin-right: 1px; border: 2px solid #a8b8cb; border-width: 0 2px; background: repeating-linear-gradient(#dfe7f1 0 2px, #a8b8cb 2px 4px); }

/* drop-downs */
.combo { display: flex; align-items: center; flex: none; height: 14px; border: 1px solid #b4b7bd; background: #fff; overflow: hidden; }
.combo select { flex: 1; min-width: 0; appearance: none; outline: 0; color: #555; font: 7px "Liberation Mono", monospace; }
.combo > svg:last-child { padding: 1px; height: 12px; border-left: 1px solid #d0d2d6; background: #f0f0f0; }
.combo.workspace { width: 79px; height: 13px; margin-left: 1px; border-color: #a9bede; background: #f3f6fc; }
.combo.workspace select, .combo.layer select { font: 8px/12px "Noto Sans CJK SC", sans-serif; }
.combo.workspace > svg:last-child, .combo.layer > svg:last-child { border: 0; background: none; }
.text-style { width: 95px; }
.text-style select { padding-left: 14px; }
.layer { width: 190px; padding-left: 2px; background: #dfdfdf; }
.layer svg { width: 10px; height: 9px; }
.layer select { padding-left: 2px; }
.swatch { flex: none; width: 8px; height: 8px; margin: 0 1px 0 2px; border: 1px solid #345; background: #008080; }
.color { width: 94px; margin-left: 1px; }
.linetype { width: 113px; }
.weight { width: 93px; }
.plot { width: 60px; }
.plot select { padding-left: 12px; }
.sample { flex: none; height: 1px; margin: 0 2px 0 4px; background: #555; }
.linetype .sample { width: 45px; }
.weight .sample { width: 27px; }
.bar .color + .split, .bar .linetype + .split, .bar .weight + .split { margin: 0 4px 0 3px; }

/* work area */
.work { display: flex; flex: 1; gap: 1px; min-height: 0; border-top: 1px solid #c8d6e8; background: #dfe8f5; }
.palette { display: flex; flex-direction: column; width: 78px; padding-left: 1px; margin-right: 1px; background: #fdfdfe; }
.palette-head { display: flex; align-items: center; gap: 4px; height: 12px; padding: 0 3px 0 2px; background: #cfdff3; color: #333; }
.palette-head h2 { flex: 1; }
.plain svg { width: 9px; height: 9px; }
.close { width: 8px; height: 8px; background: #c94f48; }
.close svg { width: 8px; height: 8px; fill: none; stroke: #fff; }
.palette-body { display: flex; flex: 1; flex-direction: column; justify-content: space-between; padding: 2px 3px 3px; }
.groups { border: 1px solid #a9b8cb; }
.groups button { display: flex; align-items: center; width: 100%; height: 12px; padding-left: 12px; background: linear-gradient(#e3effd, #d3e5fb); border-bottom: 1px solid #b5c2d2; line-height: 11px; }
.groups button:last-child { border-bottom: 0; }
.groups span, .tasks span { width: 32px; text-align: justify; text-align-last: justify; white-space: nowrap; }
.groups button::after { content: ""; margin: 0 3px 0 auto; border: 2px solid transparent; border-top-color: #444; border-bottom: 0; }
.tasks { border: 1px solid #9fb4d0; }
.tasks button { display: flex; align-items: center; gap: 3px; width: 100%; height: 16px; padding-left: 3px; background: linear-gradient(#deebfc, #b4d0f6 50%, #a5c7f4 60%, #c6dcf9); color: #34506e; }
.tasks svg { width: 14px; height: 14px; }
.tasks .active { background: linear-gradient(#fdd79a, #f9ae45 50%, #f39c22 60%, #fbc56b); color: #4a3820; }
.column { flex-direction: column; align-self: flex-start; background: #eff3fb; }
.column .split { width: 12px; height: 1px; margin: 2px 0; }
.column .grip { width: 13px; height: 6px; margin: 0; border-width: 2px 0; background: repeating-linear-gradient(90deg, #dfe7f1 0 2px, #a8b8cb 2px 4px); }
.column .tool + .grip { margin: 3px 0 4px; }

/* drawing window */
.drawing { display: flex; flex: 1; flex-direction: column; min-width: 0; background: #efefef; }
.doc-tabs { flex: none; height: 12px; border-bottom: 1px solid #68707a; }
.doc-tab { width: 66px; height: 11px; padding-left: 8px; background: linear-gradient(#ffe2a4, #f8c060); clip-path: polygon(0 100%, 11px 0, 98% 0, 100% 20%, 100% 100%); line-height: 11px; }
.doc-tab span { margin-left: 3px; color: #c09a50; }
.view { display: flex; flex: 1; min-height: 0; }
.canvas { flex: 1; min-width: 0; width: auto; height: 100%; background: #202830; fill: none; }
.wall { stroke: #bfc0be; stroke-width: 3; }
.wall-edge { stroke: #777c80; stroke-width: 4; }
.glass-edge { stroke: #136d75; stroke-width: 2; }
.glass { stroke: #1fb4bb; stroke-width: 1; }
.glass.pale { stroke: #52cfc7; }
.deep { stroke: #3d8cb9; stroke-width: 2; }
.ground { stroke: #20b02a; stroke-width: 1; }
.cross { stroke: #d8d6d8; }
.ucs { stroke: #c8c8c8; }
.ucs text { fill: #c8c8c8; stroke: none; font: 12px "Liberation Sans", sans-serif; }
.scroll { display: flex; flex: none; background: #f0f0f0; }
.scroll .track { flex: 1; display: flex; }
.scroll-y { flex-direction: column; width: 12px; }
.scroll-y .track { flex-direction: column; }
.scroll-x { align-items: center; }
.thumb { flex: none; width: 11px; height: 10px; background: #cbccce; }
.view .thumb { margin-top: auto; margin-bottom: 123px; }
.layouts { display: flex; align-items: flex-start; flex: none; height: 14px; border-top: 1px solid #b9b9b9; }
.nav .tool { width: 12px; height: 13px; }
.layout { height: 12px; line-height: 12px; }
.layout.active { width: 31px; height: 11px; background: #202830; color: #fff; line-height: 10px; font-weight: bold; clip-path: polygon(0 0, 100% 0, 80% 100%, 22% 100%); }
.layout.active + .layout { margin-left: 2px; }
.edge { width: 10px; }
.splitter { width: 3px; height: 9px; margin: 2px 0 0 auto; border: 1px solid #999; background: #fff; }
.layouts .scroll-x { width: 46%; margin-right: 11px; }
.layouts .thumb { margin-left: 50%; }

/* command line */
.command { display: flex; flex: none; height: 39px; margin-top: 2px; padding: 0 1px; background: #cddbea; }
.command-side { display: flex; flex-direction: column; align-items: center; gap: 3px; width: 11px; padding-top: 4px; }
.command-main { display: flex; flex: 1; flex-direction: column; border: 1px solid #858990; border-width: 1px 0 0 1px; background: #fff; font-size: 9px; color: #555; }
.history { display: flex; height: 26px; border-bottom: 1px solid #b0b0b0; }
.lines { flex: 1; padding-left: 2px; }
.history .scroll { justify-content: space-between; }
.prompt { display: flex; flex: 1; align-items: center; padding-left: 2px; }
.prompt input { flex: 1; min-width: 0; outline: 0; }
.prompt .scroll { width: 51px; margin-right: 11px; }

/* status bar */
.status { display: flex; align-items: center; flex: none; height: 16px; padding: 0 2px; border-top: 1px solid #d8d8d8; background: #f0f0f0; white-space: nowrap; }
.status-text { margin-right: 5px; font-size: 7px; }
.status-text b { font-size: 8px; font-weight: normal; }
.status small { font-size: 6px; }
.coords { flex: 1; }
.status .tool { width: 14px; }
.status .tool.on { height: 13px; border: 1px solid #edb85d; background: #fdecc2; }
.scale { width: 16px; font-size: 7px; text-align: left; }
.end { margin-left: 7px; }
.brand { width: 39px; padding-left: 1px; font-size: 7px; }
.resize { align-self: flex-end; width: 6px; height: 6px; fill: #bbb; }
```
FILE: script.js
```
// Fills each toolbar from its data-icons list.
// "|" is a separator, "=" is a grip, a trailing "*" marks a pressed button.
document.querySelectorAll('[data-icons]').forEach(bar => {
    bar.innerHTML = bar.dataset.icons.split(' ').map(name => {
        if (name === '|') return '<span class="split"></span>';
        if (name === '=') return '<span class="grip"></span>';
        const id = name.replace('*', '');
        const cls = (id === 'drop' ? ' drop' : '') + (name !== id ? ' on' : '');
        return `<button class="tool${cls}" aria-label="${id}"><svg><use href="#${id}"/></svg></button>`;
    }).join('');
});
```
